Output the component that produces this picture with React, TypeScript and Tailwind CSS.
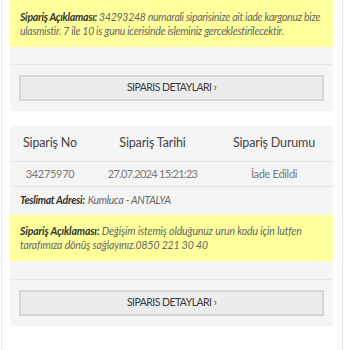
import React from "react";

const font = { fontFamily: 'Lato, "Open Sans", sans-serif' };

function Button() {
  return (
    <div className="px-[9px] pt-[10px] pb-[10px]">
      <div className="h-[26px] border-2 border-[#d6d6d6] bg-[#ececec] flex items-center justify-center text-[10.5px] tracking-[-0.55px] text-[#3a3a3a]">
        SIPARIS DETAYLARI ›
      </div>
    </div>
  );
}

export default function App() {
  return (
    <div className="relative w-[350px] h-[350px] bg-white overflow-hidden" style={font}>
      <div className="absolute left-[1px] top-0 bottom-0 w-px bg-[#ececec]" />
      <div className="absolute left-[342px] top-0 bottom-0 w-px bg-[#e6e6e6]" />
      <div className="ml-[10px] w-[323px] flex flex-col gap-[15px]">
        <div className="bg-[#f5f5f5]">
          <div className="bg-[#ffff9c] h-[47px] px-[10px] pt-[10px] text-[10.5px] leading-[14px] italic text-[#666] tracking-[-0.28px] whitespace-nowrap">
            <span className="font-bold text-[#333]">Sipariş Açıklaması:</span> 34293248 numarali siparisinize ait iade kargonuz bize
            <br />
            ulasmistir. 7 ile 10 is gunu icerisinde isleminiz gerceklestirilecektir.
          </div>
          <div className="h-[18px] border-b border-[#e6e6e6]" />
          <Button />
        </div>
        <div className="bg-[#f5f5f5]">
          <div className="grid grid-cols-[80px_125px_118px] h-[36px] items-center text-[12.5px] text-[#444] border-b border-[#e4e4e4] text-center tracking-[-0.15px]">
            <div>Sipariş No</div>
            <div>Sipariş Tarihi</div>
            <div>Sipariş Durumu</div>
          </div>
          <div className="grid grid-cols-[80px_125px_118px] h-[25px] items-center text-[11px] text-[#777] border-b border-[#e4e4e4] text-center tracking-[-0.3px]">
            <div>34275970</div>
            <div className="tracking-[-0.7px]">27.07.2024 15:21:23</div>
            <div>İade Edildi</div>
          </div>
          <div className="h-[28px] px-[10px] flex items-center text-[10.5px] italic text-[#666] tracking-[-0.3px]">
            <span className="font-bold text-[#333] mr-[3px]">Teslimat Adresi:</span>Kumluca - ANTALYA
          </div>
          <div className="bg-[#ffff9c] h-[46px] px-[10px] pt-[9px] text-[10.5px] leading-[14px] italic text-[#666] tracking-[-0.15px] whitespace-nowrap">
            <span className="font-bold text-[#333]">Sipariş Açıklaması:</span> Değişim istemiş olduğunuz urun kodu için lutfen
            <br />
            tarafımıza dönüş sağlayınız.0850 221 30 40
          </div>
          <div className="h-[19px] border-b border-[#e6e6e6]" />
          <Button />
        </div>
      </div>
    </div>
  );
}
